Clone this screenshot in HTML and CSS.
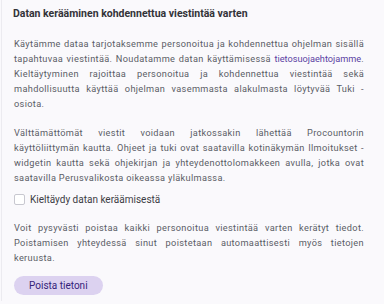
FILE: index.html
```html
<!DOCTYPE html>
<html lang="fi">
<head>
    <meta charset="UTF-8">
    <meta name="viewport" content="width=device-width, initial-scale=1.0">
    <title>Datan kerääminen</title>
    <link rel="stylesheet" href="styles.css">
</head>
<body>
    <div class="panel">
        <h2 class="title">Datan kerääminen kohdennettua viestintää varten</h2>

        <p class="text">
            Käytämme dataa tarjotaksemme personoitua ja kohdennettua ohjelman sisällä tapahtuvaa viestintää. Noudatamme datan käyttämisessä <a href="#" class="link">tietosuojaehtojamme</a>. Kieltäytyminen rajoittaa personoitua ja kohdennettua viestintää sekä mahdollisuutta käyttää ohjelman vasemmasta alakulmasta löytyvää Tuki - osiota.
        </p>

        <p class="text">
            Välttämättömät viestit voidaan jatkossakin lähettää Procountorin käyttöliittymän kautta. Ohjeet ja tuki ovat saatavilla kotinäkymän Ilmoitukset - widgetin kautta sekä ohjekirjan ja yhteydenottolomakkeen avulla, jotka ovat saatavilla Perusvalikosta oikeassa yläkulmassa.
        </p>

        <label class="check">
            <input type="checkbox" class="check-box">
            <span>Kieltäydy datan keräämisestä</span>
        </label>

        <p class="text">
            Voit pysyvästi poistaa kaikki personoitua viestintää varten kerätyt tiedot. Poistamisen yhteydessä sinut poistetaan automaattisesti myös tietojen keruusta.
        </p>

        <button class="button">Poista tietoni</button>
    </div>
</body>
</html>
```

FILE: styles.css
```css
body {
    margin: 0;
    padding: 0;
    background-color: #faf9fc;
    font-family: Roboto, Arial, sans-serif;
}
.panel {
    border-left: 1px solid #ecebf0;
    margin-left: 1px;
    padding: 6px 20px 6px 11px;
}
.title {
    font-size: 10.5px;
    font-weight: bold;
    color: #333338;
    margin: 0 0 15px 0;
    line-height: 15px;
}
.text {
    font-size: 9.2px;
    line-height: 15px;
    letter-spacing: 0.34px;
    color: #5b5d66;
    text-align: justify;
    margin: 0 0 9px 1px;
}
.text + .text {
    margin-top: 14px;
}
.link {
    color: #5a3fa3;
    text-decoration: none;
    letter-spacing: 0;
}
.check {
    display: flex;
    align-items: center;
    gap: 5px;
    font-size: 10px;
    color: #3c3c44;
    margin: 0 0 15px 1px;
}
.check-box {
    appearance: none;
    width: 11px;
    height: 11px;
    margin: 0;
    border: 1px solid #c8c8d0;
    border-radius: 2px;
    background-color: #fff;
}
.button {
    background-color: #dcd2f0;
    color: #35237a;
    font-family: Roboto, Arial, sans-serif;
    font-size: 10px;
    border: none;
    border-radius: 10px;
    padding: 0 15px;
    height: 19px;
    margin-left: 1px;
}
```
